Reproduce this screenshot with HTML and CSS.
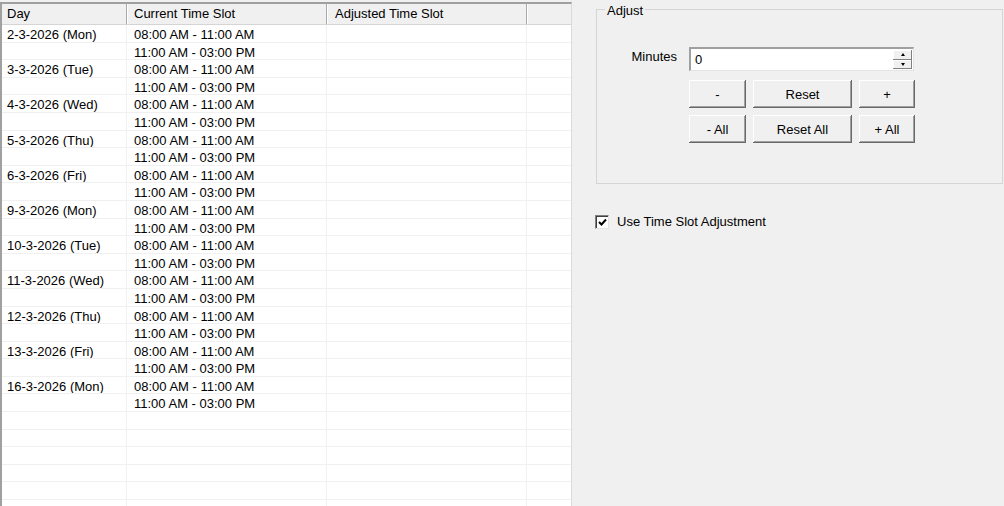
FILE: index.html
```html
<!DOCTYPE html>
<html lang="en">
<head>
    <meta charset="UTF-8">
    <meta name="viewport" content="width=device-width, initial-scale=1.0">
    <title>Time Slot Adjustment</title>
    <link rel="stylesheet" href="styles.css">
</head>
<body>
    <div class="window">
        <div class="list">
            <div class="list-header">
                <div class="cell c1">Day</div>
                <div class="cell c2">Current Time Slot</div>
                <div class="cell c3">Adjusted Time Slot</div>
                <div class="cell c4"></div>
            </div>
            <div class="list-body">
                <div class="row"><div class="cell c1">2-3-2026 (Mon)</div><div class="cell c2">08:00 AM - 11:00 AM</div><div class="cell c3"></div><div class="cell c4"></div></div>
                <div class="row"><div class="cell c1"></div><div class="cell c2">11:00 AM - 03:00 PM</div><div class="cell c3"></div><div class="cell c4"></div></div>
                <div class="row"><div class="cell c1">3-3-2026 (Tue)</div><div class="cell c2">08:00 AM - 11:00 AM</div><div class="cell c3"></div><div class="cell c4"></div></div>
                <div class="row"><div class="cell c1"></div><div class="cell c2">11:00 AM - 03:00 PM</div><div class="cell c3"></div><div class="cell c4"></div></div>
                <div class="row"><div class="cell c1">4-3-2026 (Wed)</div><div class="cell c2">08:00 AM - 11:00 AM</div><div class="cell c3"></div><div class="cell c4"></div></div>
                <div class="row"><div class="cell c1"></div><div class="cell c2">11:00 AM - 03:00 PM</div><div class="cell c3"></div><div class="cell c4"></div></div>
                <div class="row"><div class="cell c1">5-3-2026 (Thu)</div><div class="cell c2">08:00 AM - 11:00 AM</div><div class="cell c3"></div><div class="cell c4"></div></div>
                <div class="row"><div class="cell c1"></div><div class="cell c2">11:00 AM - 03:00 PM</div><div class="cell c3"></div><div class="cell c4"></div></div>
                <div class="row"><div class="cell c1">6-3-2026 (Fri)</div><div class="cell c2">08:00 AM - 11:00 AM</div><div class="cell c3"></div><div class="cell c4"></div></div>
                <div class="row"><div class="cell c1"></div><div class="cell c2">11:00 AM - 03:00 PM</div><div class="cell c3"></div><div class="cell c4"></div></div>
                <div class="row"><div class="cell c1">9-3-2026 (Mon)</div><div class="cell c2">08:00 AM - 11:00 AM</div><div class="cell c3"></div><div class="cell c4"></div></div>
                <div class="row"><div class="cell c1"></div><div class="cell c2">11:00 AM - 03:00 PM</div><div class="cell c3"></div><div class="cell c4"></div></div>
                <div class="row"><div class="cell c1">10-3-2026 (Tue)</div><div class="cell c2">08:00 AM - 11:00 AM</div><div class="cell c3"></div><div class="cell c4"></div></div>
                <div class="row"><div class="cell c1"></div><div class="cell c2">11:00 AM - 03:00 PM</div><div class="cell c3"></div><div class="cell c4"></div></div>
                <div class="row"><div class="cell c1">11-3-2026 (Wed)</div><div class="cell c2">08:00 AM - 11:00 AM</div><div class="cell c3"></div><div class="cell c4"></div></div>
                <div class="row"><div class="cell c1"></div><div class="cell c2">11:00 AM - 03:00 PM</div><div class="cell c3"></div><div class="cell c4"></div></div>
                <div class="row"><div class="cell c1">12-3-2026 (Thu)</div><div class="cell c2">08:00 AM - 11:00 AM</div><div class="cell c3"></div><div class="cell c4"></div></div>
                <div class="row"><div class="cell c1"></div><div class="cell c2">11:00 AM - 03:00 PM</div><div class="cell c3"></div><div class="cell c4"></div></div>
                <div class="row"><div class="cell c1">13-3-2026 (Fri)</div><div class="cell c2">08:00 AM - 11:00 AM</div><div class="cell c3"></div><div class="cell c4"></div></div>
                <div class="row"><div class="cell c1"></div><div class="cell c2">11:00 AM - 03:00 PM</div><div class="cell c3"></div><div class="cell c4"></div></div>
                <div class="row"><div class="cell c1">16-3-2026 (Mon)</div><div class="cell c2">08:00 AM - 11:00 AM</div><div class="cell c3"></div><div class="cell c4"></div></div>
                <div class="row"><div class="cell c1"></div><div class="cell c2">11:00 AM - 03:00 PM</div><div class="cell c3"></div><div class="cell c4"></div></div>
                <div class="row"><div class="cell c1"></div><div class="cell c2"></div><div class="cell c3"></div><div class="cell c4"></div></div>
                <div class="row"><div class="cell c1"></div><div class="cell c2"></div><div class="cell c3"></div><div class="cell c4"></div></div>
                <div class="row"><div class="cell c1"></div><div class="cell c2"></div><div class="cell c3"></div><div class="cell c4"></div></div>
                <div class="row"><div class="cell c1"></div><div class="cell c2"></div><div class="cell c3"></div><div class="cell c4"></div></div>
                <div class="row"><div class="cell c1"></div><div class="cell c2"></div><div class="cell c3"></div><div class="cell c4"></div></div>
                <div class="row"><div class="cell c1"></div><div class="cell c2"></div><div class="cell c3"></div><div class="cell c4"></div></div>
            </div>
        </div>

        <div class="side">
            <div class="group">
                <span class="group-title">Adjust</span>
                <div class="adjust-grid">
                    <label class="field-label">Minutes</label>
                    <div class="spin-box">
                        <span class="spin-value">0</span>
                        <div class="spin-buttons">
                            <span class="spin-btn"><span class="tri tri-up"></span></span>
                            <span class="spin-btn"><span class="tri tri-down"></span></span>
                        </div>
                    </div>
                    <div class="button-grid">
                        <button class="btn">-</button>
                        <button class="btn">Reset</button>
                        <button class="btn">+</button>
                        <button class="btn">- All</button>
                        <button class="btn">Reset All</button>
                        <button class="btn">+ All</button>
                    </div>
                </div>
            </div>

            <div class="check-row">
                <span class="check-box">
                    <svg width="9" height="9" viewBox="0 0 9 9"><path d="M1 4 L3.5 6.5 L8 1.5" fill="none" stroke="#000" stroke-width="2"/></svg>
                </span>
                <span>Use Time Slot Adjustment</span>
            </div>
        </div>
    </div>
</body>
</html>
```

FILE: styles.css
```css
body { margin: 0; background-color: #f0f0f0; color: #000; font-family: "Liberation Sans", Arial, sans-serif; font-size: 13px; }
.window { display: flex; height: 506px; overflow: hidden; }

/* list view */
.list { width: 572px; height: 504px; margin-top: 2px; box-sizing: border-box; border-top: 2px solid #a0a0a0; border-left: 2px solid #a0a0a0; border-right: 1px solid #dadada; background-color: #fff; overflow: hidden; flex-shrink: 0; }
.list-header { display: flex; height: 21px; box-sizing: border-box; background-color: #f0f0f0; border-bottom: 1px solid #d5d5d5; }
.list-header .cell { line-height: 20px; border-right: 1px solid #a9a9a9; box-shadow: 1px 0 0 #fff; }
.list-header .c4 { border-right: none; box-shadow: none; }
.row { display: flex; height: 17.6px; box-sizing: border-box; border-bottom: 1px solid #f0f0f0; }
.row .cell { line-height: 16px; padding-top: 2px; border-right: 1px solid #f0f0f0; }
.cell { box-sizing: border-box; padding-left: 7px; white-space: nowrap; overflow: hidden; }
.c1 { width: 125px; padding-left: 5px; }
.c2 { width: 200px; }
.c3 { width: 200px; padding-left: 8px; }
.c4 { flex: 1; border-right: none; }
.row .c4 { border-right: none; }

/* right side */
.side { flex: 1; padding-left: 24px; padding-top: 9px; }
.group { position: relative; width: 407px; height: 175px; box-sizing: border-box; border: 1px solid #d5d5d5; }
.group-title { position: absolute; top: -7px; left: 8px; padding: 0 2px; background-color: #f0f0f0; line-height: 16px; }
.adjust-grid { display: grid; grid-template-columns: 80px 226px; column-gap: 12px; row-gap: 9px; padding-top: 37px; }
.field-label { text-align: right; padding-top: 2px; line-height: 16px; }

.spin-box { display: flex; width: 225px; height: 24px; box-sizing: border-box; background-color: #fff; border-top: 2px solid #a0a0a0; border-left: 2px solid #a0a0a0; border-right: 1px solid #e3e3e3; border-bottom: 1px solid #e3e3e3; }
.spin-value { flex: 1; padding-left: 4px; line-height: 22px; }
.spin-buttons { display: flex; flex-direction: column; width: 19px; padding: 1px 1px 1px 0; }
.spin-btn { flex: 1; display: flex; align-items: center; justify-content: center; background-color: #f0f0f0; box-shadow: inset -1px -1px #808080, inset 1px 1px #fff; }
.tri { width: 0; height: 0; border-left: 2.5px solid transparent; border-right: 2.5px solid transparent; }
.tri-up { border-bottom: 3px solid #000; }
.tri-down { border-top: 3px solid #000; }

.button-grid { grid-column: 2; display: grid; grid-template-columns: 57px 99px 56px; grid-auto-rows: 28px; column-gap: 7px; row-gap: 7px; }
.btn { margin: 0; padding: 0; border: none; font-family: inherit; font-size: 13px; color: #000; background-color: #f0f0f0; box-shadow: inset -1px -1px #696969, inset 1px 1px #fff, inset -2px -2px #a0a0a0, inset 2px 2px #f0f0f0; }

.check-row { display: flex; align-items: center; gap: 8px; margin-top: 30px; margin-left: -1px; line-height: 16px; }
.check-box { display: flex; align-items: center; justify-content: center; width: 14px; height: 14px; box-sizing: border-box; background-color: #fff; border-top: 1px solid #808080; border-left: 1px solid #808080; border-right: 1px solid #e3e3e3; border-bottom: 1px solid #e3e3e3; box-shadow: inset 1px 1px #404040; }
```
